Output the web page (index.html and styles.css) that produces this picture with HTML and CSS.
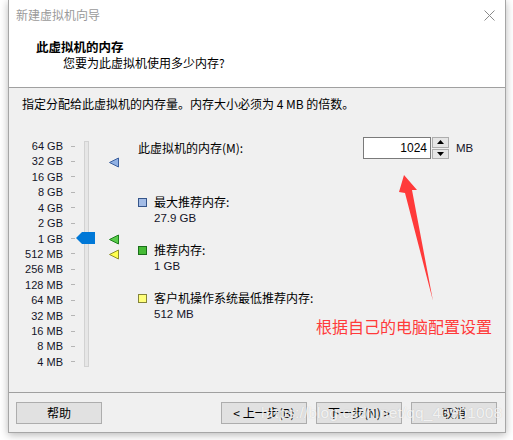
FILE: index.html
```html
<!DOCTYPE html>
<html lang="zh">
<head>
<meta charset="utf-8">
<title>新建虚拟机向导</title>
<link rel="stylesheet" href="styles.css">
</head>
<body>
<div class="window">
  <div class="titlebar">
    <span class="title">新建虚拟机向导</span>
    <svg class="close" width="11" height="11" viewBox="0 0 11 11"><path d="M0.5 0.5 L10.5 10.5 M10.5 0.5 L0.5 10.5" stroke="#8a8a8a" stroke-width="1" fill="none"/></svg>
  </div>
  <div class="header">
    <div class="h-title">此虚拟机的内存</div>
    <div class="h-sub">您要为此虚拟机使用多少内存?</div>
  </div>
  <div class="body">
    <div class="intro">指定分配给此虚拟机的内存量。内存大小必须为 4 MB 的倍数。</div>
    <div class="main">
      <div class="slider">
        <div class="scale">
          <div class="row"><span class="lbl">64 GB</span><span class="tick"></span></div>
          <div class="row"><span class="lbl">32 GB</span><span class="tick"></span></div>
          <div class="row"><span class="lbl">16 GB</span><span class="tick"></span></div>
          <div class="row"><span class="lbl">8 GB</span><span class="tick"></span></div>
          <div class="row"><span class="lbl">4 GB</span><span class="tick"></span></div>
          <div class="row"><span class="lbl">2 GB</span><span class="tick"></span></div>
          <div class="row"><span class="lbl">1 GB</span><span class="tick"></span></div>
          <div class="row"><span class="lbl">512 MB</span><span class="tick"></span></div>
          <div class="row"><span class="lbl">256 MB</span><span class="tick"></span></div>
          <div class="row"><span class="lbl">128 MB</span><span class="tick"></span></div>
          <div class="row"><span class="lbl">64 MB</span><span class="tick"></span></div>
          <div class="row"><span class="lbl">32 MB</span><span class="tick"></span></div>
          <div class="row"><span class="lbl">16 MB</span><span class="tick"></span></div>
          <div class="row"><span class="lbl">8 MB</span><span class="tick"></span></div>
          <div class="row"><span class="lbl">4 MB</span><span class="tick"></span></div>
        </div>
        <div class="track"></div>
        <div class="thumb"></div>
        <svg class="marker m-blue" width="11" height="11" viewBox="0 0 11 11"><polygon points="0.5,5.5 9.5,1 9.5,10" fill="#8fb0e3" stroke="#3b5f9e"/></svg>
        <svg class="marker m-green" width="11" height="11" viewBox="0 0 11 11"><polygon points="0.5,5.5 9.5,1 9.5,10" fill="#58cc4a" stroke="#1d7f1d"/></svg>
        <svg class="marker m-yellow" width="11" height="11" viewBox="0 0 11 11"><polygon points="0.5,5.5 9.5,1 9.5,10" fill="#ffff4d" stroke="#8f8f2a"/></svg>
      </div>
      <div class="right">
        <div class="mem-row">
          <span class="mem-label">此虚拟机的内存(M):</span>
          <div class="input">1024</div>
          <div class="spin">
            <div class="spin-btn"><svg width="7" height="4" viewBox="0 0 7 4"><polygon points="3.5,0 7,4 0,4" fill="#000"/></svg></div>
            <div class="spin-btn"><svg width="7" height="4" viewBox="0 0 7 4"><polygon points="0,0 7,0 3.5,4" fill="#000"/></svg></div>
          </div>
          <span class="unit">MB</span>
        </div>
        <div class="legend">
          <div class="item">
            <span class="sq sq-blue"></span>
            <div class="txt"><div>最大推荐内存:</div><div>27.9 GB</div></div>
          </div>
          <div class="item">
            <span class="sq sq-green"></span>
            <div class="txt"><div>推荐内存:</div><div>1 GB</div></div>
          </div>
          <div class="item">
            <span class="sq sq-yellow"></span>
            <div class="txt"><div>客户机操作系统最低推荐内存:</div><div>512 MB</div></div>
          </div>
        </div>
      </div>
    </div>
  </div>
  <div class="footer">
    <button class="btn">帮助</button>
    <div class="btn-group">
      <button class="btn">&lt; 上一步(B)</button>
      <button class="btn">下一步(N) &gt;</button>
      <button class="btn">取消</button>
    </div>
  </div>
  <svg class="arrow" width="60" height="140" viewBox="390 170 60 140"><polygon points="404,175 417,190 412,190 433,301 405,193 399,192" fill="#ff3a3a"/></svg>
  <div class="note">根据自己的电脑配置设置</div>
  <div class="watermark">https://blog.csdn.net/qq_43901008</div>
</div>
</body>
</html>
```

FILE: styles.css
```css
* { box-sizing: border-box; }
html, body { margin: 0; padding: 0; }
body {
  background: #ffffff;
  font-family: "Noto Sans CJK SC", "Liberation Sans", sans-serif;
  font-size: 12px;
  color: #000;
  width: 513px;
  height: 440px;
  overflow: hidden;
}
.window {
  position: relative;
  margin-left: 8px;
  width: 498px;
  height: 433px;
  border: 1px solid #a6a6a6;
  border-top: none;
  background: #f0f0f0;
  box-shadow: 0 2px 8px rgba(0,0,0,0.28);
  display: flex;
  flex-direction: column;
}
.titlebar {
  height: 30px;
  background: #fff;
  display: flex;
  align-items: center;
  justify-content: space-between;
  padding: 0 10px 0 7px;
}
.title { color: #9a9a9a; font-size: 12px; line-height: 16px; }
.close { display: block; }
.header {
  height: 58px;
  background: #fff;
  border-bottom: 1px solid #a0a0a0;
  padding: 9px 0 0 27px;
}
.h-title { font-weight: bold; font-size: 12.5px; line-height: 16px; }
.h-sub { padding-left: 27px; line-height: 16px; }
.body { flex: 1; display: flex; flex-direction: column; }
.intro { padding: 8px 0 0 13px; line-height: 16px; height: 24px; }
.main { display: flex; flex: 1; }
.slider { position: relative; width: 128px; }
.scale { padding-top: 26.3px; }
.row { display: flex; align-items: center; height: 15.43px; }
.lbl {
  width: 54px;
  text-align: right;
  font-family: "Liberation Sans", sans-serif;
  font-size: 11px;
  color: #141428;
}
.tick { width: 4px; height: 1px; background: #b5b5b5; margin-left: 8px; }
.track {
  position: absolute;
  left: 75px;
  top: 29px;
  width: 5px;
  height: 226px;
  background: #e6e6e6;
  border: 1px solid #d2d2d2;
}
.thumb {
  position: absolute;
  left: 67px;
  top: 120px;
  width: 19px;
  height: 12px;
  background: #0078d7;
  clip-path: polygon(0 50%, 6px 0, 100% 0, 100% 100%, 6px 100%);
}
.marker { position: absolute; left: 100px; display: block; }
.m-blue { top: 45px; }
.m-green { top: 122px; }
.m-yellow { top: 137px; }
.right { flex: 1; padding-top: 25px; padding-left: 1px; }
.mem-row { display: flex; align-items: center; height: 22px; }
.mem-label { width: 225px; line-height: 16px; }
.input {
  width: 68px;
  height: 22px;
  background: #fff;
  border: 1px solid #7a7a7a;
  text-align: right;
  padding-right: 3px;
  font-family: "Liberation Sans", sans-serif;
  font-size: 12px;
  line-height: 20px;
}
.spin { width: 18px; height: 22px; display: flex; flex-direction: column; gap: 1px; padding: 0 0 0 1px; }
.spin-btn {
  flex: 1;
  background: #e5e5e5;
  border: 1px solid #adadad;
  display: flex;
  align-items: center;
  justify-content: center;
}
.spin-btn svg { display: block; }
.unit { margin-left: 7px; font-family: "Liberation Sans", sans-serif; font-size: 11.5px; color: #141428; }
.legend { display: flex; flex-direction: column; gap: 16px; padding-top: 35px; }
.item { display: flex; align-items: flex-start; }
.sq { width: 9px; height: 9px; border: 1px solid; margin-top: 4px; margin-right: 7px; flex: none; }
.sq-blue { background: #a3bce6; border-color: #35558a; }
.sq-green { background: #46bb36; border-color: #1a6e1a; }
.sq-yellow { background: #ffff7a; border-color: #84843a; }
.txt { line-height: 16px; }
.txt div:last-child { font-family: "Liberation Sans", sans-serif; font-size: 11.5px; color: #141428; }
.footer {
  height: 40px;
  border-top: 1px solid #a0a0a0;
  display: flex;
  justify-content: space-between;
  align-items: flex-start;
  padding: 9px 8px 0 7px;
}
.btn-group { display: flex; gap: 9px; }
.btn {
  width: 86px;
  height: 22px;
  background: #e1e1e1;
  border: 1px solid #adadad;
  font-family: "Noto Sans CJK SC", "Liberation Sans", sans-serif;
  font-size: 12px;
  color: #000;
  padding: 0;
  line-height: 18px;
}
.arrow { position: absolute; left: 381px; top: 170px; }
.note {
  position: absolute;
  left: 307px;
  top: 316px;
  color: #ff3a3a;
  font-size: 16px;
  line-height: 20px;
}
.watermark {
  position: absolute;
  left: 252px;
  top: 404px;
  font-family: "Liberation Sans", sans-serif;
  font-size: 15.5px;
  color: rgba(255,255,255,0.8);
  text-shadow: 0 0 1px rgba(120,120,120,0.35);
  letter-spacing: 0.1px;
}
```
